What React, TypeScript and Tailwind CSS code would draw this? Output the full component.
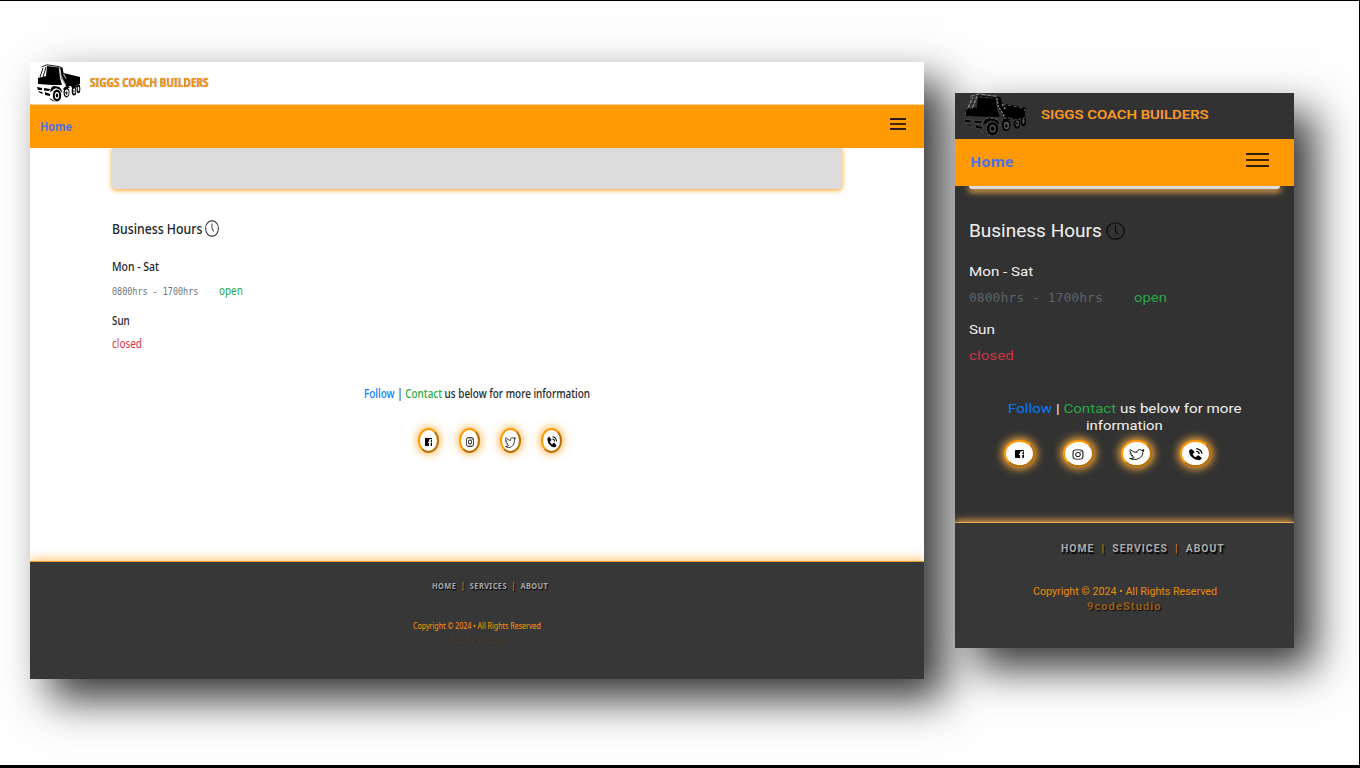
import { useLayoutEffect, useRef, useState, type ReactNode } from "react";
import clsx from "clsx";
import { AiOutlineInstagram } from "react-icons/ai";
import { BiSolidPhoneCall } from "react-icons/bi";

/* Fits one line of text to a given width by scaling it horizontally. */
function Fit({ width, className, children }: { width: number; className?: string; children: ReactNode }) {
  const ref = useRef<HTMLSpanElement>(null);
  const [scale, setScale] = useState(1);
  useLayoutEffect(() => {
    if (ref.current) setScale(width / ref.current.offsetWidth);
  }, [width]);
  return (
    <span className="block shrink-0" style={{ width }}>
      <span ref={ref} className={clsx("block w-max origin-left whitespace-pre", className)} style={{ transform: `scaleX(${scale})` }}>
        {children}
      </span>
    </span>
  );
}

function Truck({ dark }: { dark?: boolean }) {
  const gap = dark ? "#555" : "white";
  const line = dark ? "#999" : "white";
  const outline = dark ? "#8a8a8a" : "black";
  return (
    <svg
      viewBox="0 0 44 38"
      preserveAspectRatio="none"
      className={dark ? "h-[43px] w-[63px]" : "h-[38px] w-[44px]"}
      fill="black"
    >
      <path d="M10 2 22 3.500 23 14 25 21 15 21 1 20 1 14 9 12Z" />
      <path d="M4.500 3 10 .8 23 2.800M3 13 6 4M6 13 9 3" fill="none" stroke={outline} strokeWidth=".9" strokeDasharray={dark ? "3 1" : "none"} />
      <path d="M22.500 3 25.500 3.500 26.500 9 43 13V20L38 22 29 22 24 14Z" />
      <path d="M23 4.500 24 12 28.500 21M26.500 10 29 14.500" fill="none" stroke={line} strokeWidth=".8" strokeDasharray={dark ? "2 1" : "none"} />
      <path d="M10.500 3.500 20 4.500M1 19.500 1.500 14 9 12.500" fill="none" stroke={dark ? "#777" : "none"} strokeWidth=".5" strokeDasharray="3 1" />
      <path d="M27 9.800 42 13.500 43 19" fill="none" stroke={dark ? "#777" : "none"} strokeWidth=".6" strokeDasharray="2 2" />
      <path d="M0 23 5 24 5 26 1 26ZM7 24 13 25 12 27 7 26.500ZM1 27 5 28 6 30 3 29ZM8 28 13 30 13 32 8 31ZM12 34 16 36 18 38 14 36Z" stroke={dark ? "#777" : "none"} strokeWidth=".3" />
      <path d="M13 28Q14 20.500 20 22.500 25 23 25 29L23 26Q18 22 15 27Z" />
      <ellipse cx="20" cy="31.500" rx="4.200" ry="6" stroke={dark ? "#777" : "none"} strokeWidth=".4" strokeDasharray="2 1" />
      <ellipse cx="20" cy="31.500" rx="2.200" ry="3.500" fill={gap} />
      <ellipse cx="20" cy="31.500" rx="1.300" ry="2.100" />
      <path d="M26 25Q29 20 33 23L32 24Q29 23 28 27Z" />
      <ellipse cx="29.500" cy="28.500" rx="3" ry="5" />
      <ellipse cx="29.700" cy="28.800" rx="1.900" ry="3.300" fill={gap} />
      <ellipse cx="29.500" cy="29" rx=".9" ry="1.700" />
      <path d="M34 22 43 21V23L35 24Z" />
      <ellipse cx="37" cy="27" rx="2.300" ry="4.500" />
      <ellipse cx="37.200" cy="27" rx="1.200" ry="2.700" fill={gap} />
      <ellipse cx="37" cy="27" rx=".5" ry="1.300" />
      <ellipse cx="41.500" cy="25" rx="1.800" ry="4.300" />
      <ellipse cx="41.500" cy="25" rx=".8" ry="2.300" fill={gap} />
      {dark && <path d="M13 28Q14 20.500 20 22.500 25 23 25 29M26 25Q29 20 33 23M35 24 43 22" fill="none" stroke="#888" strokeWidth=".5" strokeDasharray="2 1" />}
    </svg>
  );
}

function Clock({ className }: { className: string }) {
  return (
    <svg viewBox="0 0 20 20" preserveAspectRatio="none" className={className} fill="none" stroke="currentColor" strokeWidth="1.200">
      <circle cx="10" cy="10" r="9.200" />
      <path d="M10 4v6l2.500 3.500" />
      <path d="M10 1v1.500M10 17.500V19M1 10h1.500M17.500 10H19M3.700 3.700l1 1M15.300 15.300l1 1M3.700 16.300l1-1M15.300 4.700l1-1" strokeWidth=".6" />
    </svg>
  );
}

function Menu({ wide }: { wide?: boolean }) {
  return (
    <span className={wide ? "flex w-[23px] flex-col gap-[4px]" : "flex w-4 flex-col gap-[3px]"}>
      <i className="h-[2px] bg-[#2b1b00]" />
      <i className="h-[2px] bg-[#422800]" />
      <i className="h-[2px] bg-[#2b1b00]" />
    </span>
  );
}

function Facebook({ className }: { className: string }) {
  return (
    <svg viewBox="0 0 16 16" preserveAspectRatio="none" className={className} fill="currentColor">
      <path d="M1 0h14l1 1v14l-1 1h-2V10h2V7.500h-2V6c0-1 .3-1.500 1.300-1.500H15V2h-2.500C10 2 9 3.500 9 5.500v2H7V10h2v6H1l-1-1V1Z" />
    </svg>
  );
}

function Twitter({ className }: { className: string }) {
  return (
    <svg viewBox="0 0 24 24" preserveAspectRatio="none" className={className} fill="none" stroke="currentColor" strokeWidth="1.500" strokeLinejoin="round">
      <path d="M22.500 4.500 20.500 5.500 22 3 19 4.300C16 1.500 11.500 3.800 12 8 8 8 4.500 6 2 3 .8 5.500 1.500 8 3.500 9.500L1.700 9C1.800 11.500 3.200 13 5.500 13.800L3.700 14C4.500 16 6 17 8 17.200 6 19 3.500 19.500 1 19.200 10 24.500 21 19 20.700 7.500Z" />
    </svg>
  );
}

function Socials({ wide }: { wide?: boolean }) {
  const ring = clsx(
    "flex items-center justify-center rounded-[50%] border-2 border-t-[#ff9a05] border-l-[#ff9a05] border-r-[#b96f04] border-b-[#b96f04] bg-white text-black",
    wide
      ? "h-[27px] w-[31px] pt-px shadow-[0_0_9px_2px_#ffae3c]"
      : "h-[25px] w-[21px] pt-[3px] shadow-[0_0_9px_1px_#ff9a05c0]",
  );
  return (
    <div className={wide ? "flex gap-[27.500px]" : "flex gap-5"}>
      <span className={ring}><Facebook className={wide ? "h-[8px] w-[9px]" : "h-[8px] w-[7px]"} /></span>
      <span className={ring}><AiOutlineInstagram preserveAspectRatio="none" className={wide ? "h-[13px] w-[14px]" : "h-[12px] w-[10px]"} /></span>
      <span className={ring}><Twitter className={wide ? "h-[13px] w-[16px]" : "h-[13px] w-[11px]"} /></span>
      <span className={ring}><BiSolidPhoneCall preserveAspectRatio="none" className={wide ? "h-[15px] w-[17px]" : "h-[14px] w-[12px] shrink-0"} /></span>
    </div>
  );
}

function Desktop() {
  return (
    <section className="mt-[61px] ml-[30px] flex h-[617px] w-[894px] shrink-0 flex-col bg-white font-['Noto_Sans',sans-serif] text-[#212529] shadow-[20px_20px_40px_rgba(0,0,0,0.8)]">
      <header className="flex h-[43px] items-center pb-px pl-[7px]">
        <Truck />
        <div className="ml-[9px]">
          <Fit width={119} className="text-[12px] leading-[16px] font-bold text-[#ff9a05] [text-shadow:0_0_1px_#6b6ba8]">SIGGS COACH BUILDERS</Fit>
        </div>
      </header>
      <nav className="flex h-[43px] items-center justify-between bg-[#ff9a05] pr-[18px] pl-[10px] shadow-[0_-1px_0_#ffd493]">
        <Fit width={32} className="text-[12.500px] leading-[18px] font-bold text-[#4f70ec]">Home</Fit>
        <div className="-mt-[5px]"><Menu /></div>
      </nav>
      <main className="flex h-[413px] flex-col overflow-hidden pl-[82px]">
        <div className="h-[41px] w-[730px] shrink-0 rounded-b-[4px] bg-[#dcdcdc] shadow-[0_1px_5px_#ff9a05]" />
        <div className="mt-[28px] flex h-[22px] items-center">
          <Fit width={90} className="text-[15px] leading-[22px] font-medium">Business Hours</Fit>
          <Clock className="ml-[3px] h-[17px] w-[14px]" />
        </div>
        <div className="mt-5 h-4"><Fit width={47} className="text-[12px] leading-4 font-medium">Mon - Sat</Fit></div>
        <div className="mt-[8px] flex h-4 gap-[21px]">
          <Fit width={86} className="font-['DejaVu_Sans_Mono',monospace] text-[10px] leading-[17px] text-[#6c757d]">0800hrs - 1700hrs</Fit>
          <Fit width={24} className="text-[12px] leading-4 text-[#28a745]">open</Fit>
        </div>
        <div className="mt-[14px] h-4"><Fit width={18} className="text-[12px] leading-4 font-medium">Sun</Fit></div>
        <div className="mt-[7px] h-4"><Fit width={30} className="text-[12px] leading-4 text-[#dc3545]">closed</Fit></div>
        <div className="mt-[34px] ml-[252px] h-4">
          <Fit width={226} className="text-[12px] leading-4 font-medium">
            <span className="text-[#007bff]">Follow</span> | <span className="text-[#28a745]">Contact</span> us below for more information
          </Fit>
        </div>
        <div className="mt-[26px] ml-[306px]"><Socials /></div>
      </main>
      <footer className="mt-px flex-1 bg-[#373737] [clip-path:inset(-14px_0_0_0)] shadow-[0_-2px_10px_#ff9a05b0,0_-1px_0_#d9a458]">
        <div className="mt-[17px] ml-[402px]">
          <Fit width={116} className="text-[9px] leading-[14px] font-bold tracking-[0.500px] text-[#aaa] [text-shadow:1px_1px_1px_black]">
            HOME <b className="text-[#c66b20]"> | </b> SERVICES <b className="text-[#c66b20]"> | </b> ABOUT
          </Fit>
        </div>
        <div className="mt-[26px] ml-[383px]">
          <Fit width={128} className="text-[8.500px] leading-[13px] text-[#ff9a05]">Copyright © 2024 • All Rights Reserved</Fit>
        </div>
        <div className="mt-px ml-[420px]">
          <Fit width={54} className="text-[10px] leading-[14px] font-bold tracking-[1px] text-[#49392a] [text-shadow:1px_1px_1px_#333]">9codeStudio</Fit>
        </div>
      </footer>
    </section>
  );
}

function Mobile() {
  return (
    <section className="mt-[92px] ml-[31px] flex h-[555px] w-[339px] shrink-0 flex-col bg-[#323232] font-['Roboto',sans-serif] text-[#f1f1f1] shadow-[20px_20px_40px_rgba(0,0,0,0.8)]">
      <header className="flex h-[46px] pl-[9px]">
        <Truck dark />
        <div className="mt-[12px] ml-[14px]">
          <Fit width={167.5} className="text-[13.500px] leading-[18px] font-medium text-[#ff9a05] [text-shadow:0_0_1px_#6b4fa8]">SIGGS COACH BUILDERS</Fit>
        </div>
      </header>
      <nav className="flex h-[47px] items-center justify-between bg-[#ff9a05] pr-[25px] pl-[15px]">
        <div className="-mt-px"><Fit width={43} className="font-['Noto_Sans',sans-serif] text-[14px] leading-[20px] font-bold text-[#4f70ec]">Home</Fit></div>
        <div className="-mt-[5px]"><Menu wide /></div>
      </nav>
      <main className="flex h-[337px] flex-col overflow-hidden pl-[14px]">
        <div className="h-[3px] w-[311px] shrink-0 rounded-b-[4px] bg-[#dcdcdc] shadow-[0_2px_6px_1px_#ffb752]" />
        <div className="mt-[31px] flex h-[22px] items-center">
          <Fit width={133} className="text-[18px] leading-[22px]">Business Hours</Fit>
          <Clock className="ml-[4px] h-[18px] w-[19px] text-[#0c0c0c]" />
        </div>
        <div className="mt-[21px] h-4"><Fit width={64} className="text-[13.500px] leading-4">Mon - Sat</Fit></div>
        <div className="mt-[10px] flex h-4 gap-[31px]">
          <Fit width={134} className="font-['DejaVu_Sans_Mono',monospace] text-[12px] leading-[18px] text-[#5b636a]">0800hrs - 1700hrs</Fit>
          <Fit width={33} className="text-[13.500px] leading-4 text-[#28a745]">open</Fit>
        </div>
        <div className="mt-4 h-4"><Fit width={26} className="text-[13.500px] leading-4">Sun</Fit></div>
        <div className="mt-[10px] h-4"><Fit width={45} className="text-[13.500px] leading-4 text-[#c93545]">closed</Fit></div>
        <div className="mt-[37px] ml-[39px] h-4">
          <Fit width={233} className="text-[13.500px] leading-4">
            <span className="text-[#007bff]">Follow</span> | <span className="text-[#28a745]">Contact</span> us below for more
          </Fit>
        </div>
        <div className="ml-[117px] h-[17px]"><Fit width={77} className="text-[13.500px] leading-[18px]">information</Fit></div>
        <div className="mt-[7px] ml-[35px]"><Socials wide /></div>
      </main>
      <footer className="flex-1 bg-[#373737] [clip-path:inset(-14px_0_0_0)] shadow-[0_-2px_8px_#ffb752,0_-1px_0_#d89a45]">
        <div className="mt-[19px] ml-[106px]">
          <Fit width={164} className="text-[10px] leading-[14px] font-bold tracking-[1px] text-[#aaa] [text-shadow:1.500px_1.500px_1px_black]">
            HOME <b className="font-normal text-[#d88310]"> | </b> SERVICES <b className="font-normal text-[#d88310]"> | </b> ABOUT
          </Fit>
        </div>
        <div className="mt-[28px] ml-[78px]">
          <Fit width={184} className="text-[10px] leading-[15px] text-[#e98e0b]">Copyright © 2024 • All Rights Reserved</Fit>
        </div>
        <div className="ml-[132px]">
          <Fit width={75} className="text-[10px] leading-[15px] font-bold tracking-[1px] text-[#98601a] [text-shadow:1px_1px_1px_#111]">9codeStudio</Fit>
        </div>
      </footer>
    </section>
  );
}

export default function App() {
  return (
    <div className="flex h-[768px] w-[1360px] items-start overflow-hidden border-t border-r border-b-[3px] border-black bg-[#fefefe]">
      <Desktop />
      <Mobile />
    </div>
  );
}
